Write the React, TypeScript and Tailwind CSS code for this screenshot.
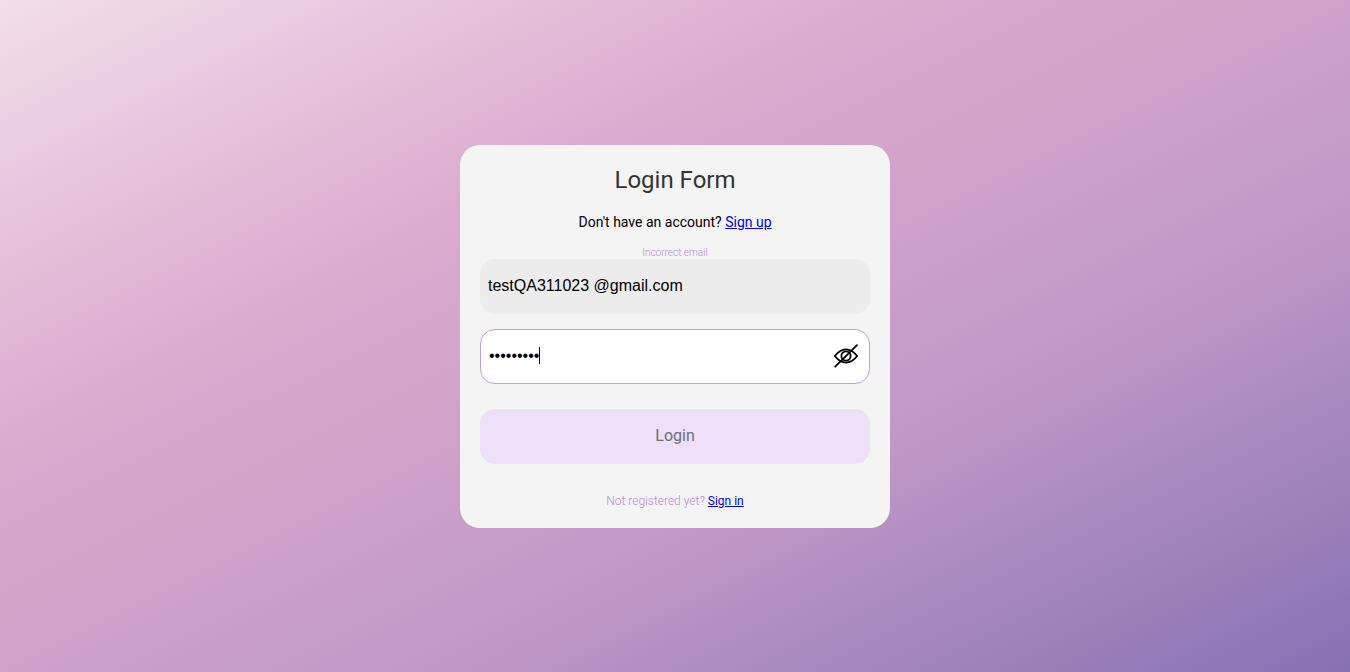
import { useEffect, useRef, useState } from "react";

function EyeOffIcon() {
  return (
    <svg
      width="26"
      height="26"
      viewBox="0 0 26 26"
      fill="none"
      stroke="#000"
      strokeWidth="1.8"
      strokeLinecap="round"
      strokeLinejoin="round"
      aria-hidden="true"
    >
      <path d="M1.800 13C5.200 8.800 9 6.400 13 6.400S20.800 8.800 24.200 13C20.800 17.200 17 19.600 13 19.600S5.200 17.200 1.800 13Z" />
      <circle cx="13" cy="13" r="4.600" />
      <path d="M2.200 23.600 24 2.200" />
    </svg>
  );
}

export default function App() {
  const [email, setEmail] = useState("testQA311023 @gmail.com");
  const [password, setPassword] = useState("qwerty123");
  const [visible, setVisible] = useState(false);
  const passwordRef = useRef<HTMLInputElement>(null);

  useEffect(() => {
    const field = passwordRef.current;
    if (field) {
      field.focus();
      field.setSelectionRange(field.value.length, field.value.length);
    }
  }, []);

  return (
    <main className="flex min-h-screen items-center justify-center bg-[linear-gradient(to_bottom_right,#f3deea_0%,#dbabcf_33%,#c098c6_66%,#8671b4_100%)] font-['Roboto',sans-serif]">
      <form
        className="flex w-full max-w-[430px] flex-col rounded-[20px] bg-[#f4f4f4] p-5 text-center"
        onSubmit={(e) => e.preventDefault()}
      >
        <h1 className="text-2xl leading-[30px] text-[#333]">Login Form</h1>
        <p className="mt-4 text-sm leading-[22px] text-black">
          Don't have an account?{" "}
          <a href="#signup" className="text-[#0000ee] underline">
            Sign up
          </a>
        </p>
        <p id="email-error" className="mt-[14px] text-[10px] leading-3 font-light text-[#b98ad6]">
          Incorrect email
        </p>
        <input
          type="text"
          aria-label="Email"
          aria-describedby="email-error"
          value={email}
          onChange={(e) => setEmail(e.target.value)}
          className="h-[55px] w-full rounded-[15px] bg-[#ececec] px-2 font-['Liberation_Sans',Arial,sans-serif] text-base text-black outline-none"
        />
        <div className="relative mt-[15px] flex h-[55px] items-center rounded-[15px] border border-[#c49fd9] bg-white pr-2.5 pl-2">
          <input
            ref={passwordRef}
            type={visible ? "text" : "password"}
            aria-label="Password"
            value={password}
            onChange={(e) => setPassword(e.target.value)}
            className="min-w-0 flex-1 self-stretch bg-transparent font-['Liberation_Sans',Arial,sans-serif] text-base text-black caret-transparent outline-none"
          />
          <span className="pointer-events-none absolute top-[17px] left-[58px] h-[17px] w-px bg-black" aria-hidden="true" />
          <button
            type="button"
            aria-label={visible ? "Hide password" : "Show password"}
            onClick={() => setVisible(!visible)}
          >
            <EyeOffIcon />
          </button>
        </div>
        <button
          type="submit"
          className="mt-[25px] h-[55px] w-full rounded-[15px] bg-[#efe0f9] text-base text-[#6f6c75]"
        >
          Login
        </button>
        <p className="mt-[30px] text-xs leading-[14px] font-light text-[#b98ad6]">
          Not registered yet?{" "}
          <a href="#signin" className="font-normal text-[#0000ee] underline">
            Sign in
          </a>
        </p>
      </form>
    </main>
  );
}
